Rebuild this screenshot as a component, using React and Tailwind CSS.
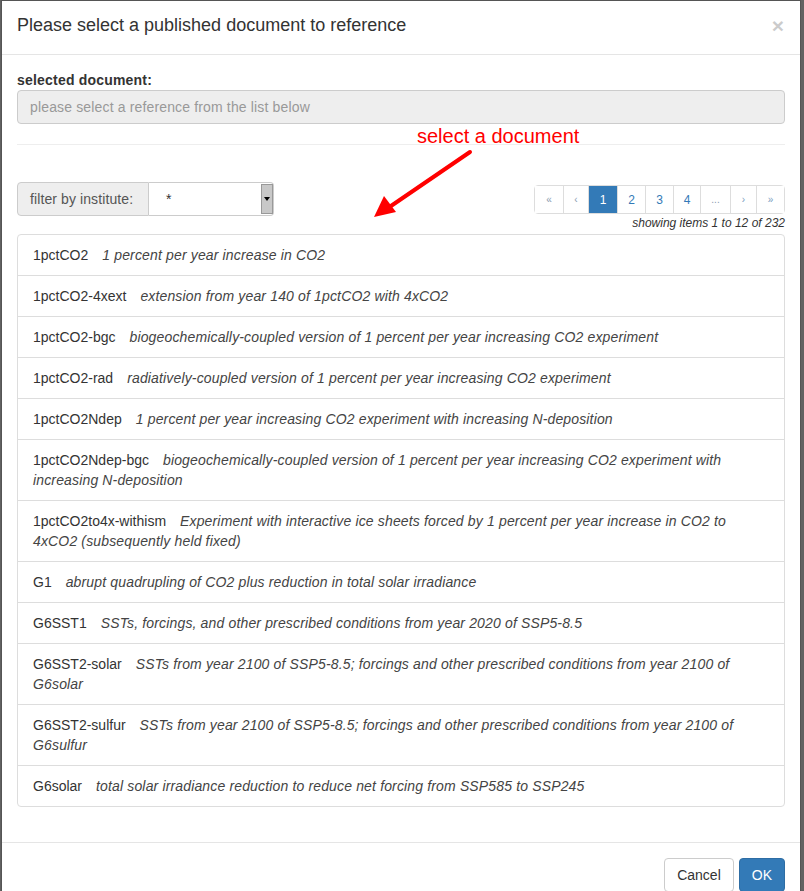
const ITEMS = [
  ['1pctCO2', '1 percent per year increase in CO2'],
  ['1pctCO2-4xext', 'extension from year 140 of 1pctCO2 with 4xCO2'],
  ['1pctCO2-bgc', 'biogeochemically-coupled version of 1 percent per year increasing CO2 experiment'],
  ['1pctCO2-rad', 'radiatively-coupled version of 1 percent per year increasing CO2 experiment'],
  ['1pctCO2Ndep', '1 percent per year increasing CO2 experiment with increasing N-deposition'],
  ['1pctCO2Ndep-bgc', 'biogeochemically-coupled version of 1 percent per year increasing CO2 experiment with increasing N-deposition'],
  ['1pctCO2to4x-withism', 'Experiment with interactive ice sheets forced by 1 percent per year increase in CO2 to 4xCO2 (subsequently held fixed)'],
  ['G1', 'abrupt quadrupling of CO2 plus reduction in total solar irradiance'],
  ['G6SST1', 'SSTs, forcings, and other prescribed conditions from year 2020 of SSP5-8.5'],
  ['G6SST2-solar', 'SSTs from year 2100 of SSP5-8.5; forcings and other prescribed conditions from year 2100 of G6solar'],
  ['G6SST2-sulfur', 'SSTs from year 2100 of SSP5-8.5; forcings and other prescribed conditions from year 2100 of G6sulfur'],
  ['G6solar', 'total solar irradiance reduction to reduce net forcing from SSP585 to SSP245'],
]

const PAGES = [
  { label: '«', kind: 'muted', w: 'w-[28px]' },
  { label: '‹', kind: 'muted', w: 'w-[25px]' },
  { label: '1', kind: 'active', w: 'w-[29px]' },
  { label: '2', kind: 'link', w: 'w-[28px]' },
  { label: '3', kind: 'link', w: 'w-[28px]' },
  { label: '4', kind: 'link', w: 'w-[27px]' },
  { label: '...', kind: 'muted', w: 'w-[30px]' },
  { label: '›', kind: 'arrow', w: 'w-[26px]' },
  { label: '»', kind: 'arrow', w: 'w-[28px]' },
]

const Pagination = () => (
  <ul className="flex h-[29px] rounded border border-[#ddd] text-[12px]">
    {PAGES.map((p, i) => {
      const tone =
        p.kind === 'active'
          ? 'bg-[#337ab7] text-white'
          : p.kind === 'link'
            ? 'bg-white text-[#337ab7]'
            : p.kind === 'arrow'
              ? 'bg-white text-[#7a9cc0] text-[10px]'
              : 'bg-white text-[#8a9bb0] text-[10px]'
      return (
        <li
          key={i}
          className={`flex items-center justify-center ${p.w} ${tone} ${i > 0 ? 'border-l border-[#ddd]' : ''}`}
        >
          {p.label}
        </li>
      )
    })}
  </ul>
)

const App = () => {
  return (
    <div className="h-[891px] w-[804px] overflow-hidden bg-[#626262] font-['Liberation_Sans',Arial,sans-serif] text-[14px] leading-[20px] text-[#333]">
      <div className="relative ml-[1px] h-[900px] w-[800px] border border-[#555] bg-white">
        {/* header */}
        <div className="flex h-[54px] items-center justify-between border-b border-[#e5e5e5] px-[15px] pb-[5px]">
          <h4 className="text-[18px] leading-[26px] text-[#333]">Please select a published document to reference</h4>
          <span className="mr-[1px] text-[21px] font-bold leading-none text-[#000] opacity-20">×</span>
        </div>

        {/* body */}
        <div className="px-[15px] pt-[15px] pb-[15px]">
          <label className="block font-bold leading-[20px] tracking-[0.2px]">selected document:</label>
          <div className="flex h-[34px] items-center rounded border border-[#ccc] bg-[#eee] px-[12px] tracking-[0.15px] text-[#999]">
            please select a reference from the list below
          </div>
          <hr className="mt-[20px] mb-[20px] border-t border-[#eee]" />

          <div className="flex items-start justify-between pt-[17px]">
            <div className="flex h-[34px]">
              <span className="flex w-[132px] items-center rounded-l border border-[#ccc] bg-[#eee] pl-[12px] tracking-[0.1px] text-[#555]">
                filter by institute:
              </span>
              <div className="flex w-[125px] items-stretch rounded-r border border-l-0 border-[#ccc] bg-white">
                <span className="flex flex-1 items-center pl-[17px] text-[#333]">*</span>
                <span className="my-[1px] flex w-[12px] items-center justify-center border border-[#999] bg-[#c8c8c8]">
                  <span className="h-0 w-0 border-x-[3px] border-t-[4px] border-x-transparent border-t-black" />
                </span>
              </div>
            </div>
            <div className="flex flex-col items-end pt-[3px]">
              <Pagination />
              <div className="text-[12px] italic leading-[18px] text-[#333]">showing items 1 to 12 of 232</div>
            </div>
          </div>

          <ul className="mt-[2px] mb-[20px] rounded border border-[#ddd]">
            {ITEMS.map(([code, desc], i) => (
              <li key={code} className={`px-[15px] py-[10px] ${i > 0 ? 'border-t border-[#ddd]' : ''}`}>
                {code}
                <span className="ml-[14px] italic tracking-[0.15px] text-[#444]">{desc}</span>
              </li>
            ))}
          </ul>
        </div>

        {/* footer */}
        <div className="flex justify-end gap-[5px] border-t border-[#e5e5e5] p-[15px]">
          <button className="h-[34px] rounded border border-[#ccc] bg-white px-[12px] text-[#333]">Cancel</button>
          <button className="h-[34px] rounded border border-[#2e6da4] bg-[#337ab7] px-[12px] text-white">OK</button>
        </div>

        {/* annotation overlay */}
        <div className="absolute left-[415px] top-[123px] text-[20px] leading-[24px] text-[#f00]">select a document</div>
        <svg className="absolute left-[360px] top-[140px]" width="120" height="90" viewBox="0 0 120 90">
          <line x1="108" y1="11" x2="26" y2="67" stroke="#f00" strokeWidth="4" strokeLinecap="round" />
          <polygon points="12,76 22,55 34,71" fill="#f00" />
        </svg>
      </div>
    </div>
  )
}

export default App
